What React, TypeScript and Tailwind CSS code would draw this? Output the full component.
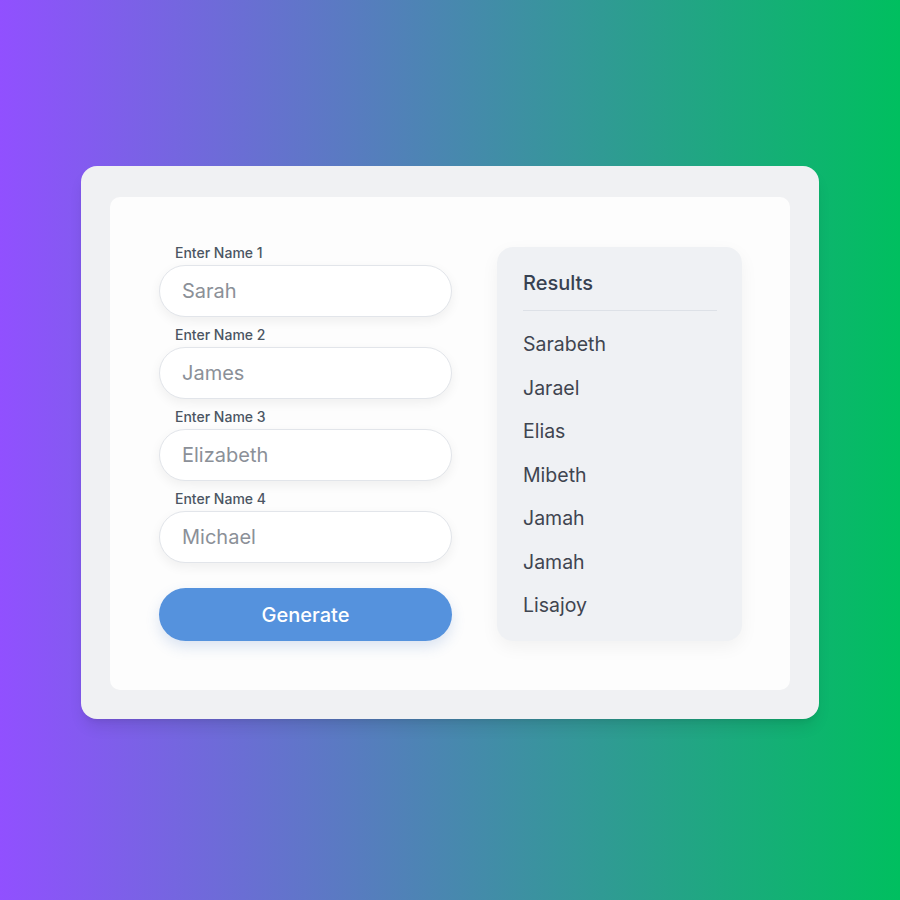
const names = ["Sarah", "James", "Elizabeth", "Michael"]
const results = ["Sarabeth", "Jarael", "Elias", "Mibeth", "Jamah", "Jamah", "Lisajoy"]

export default function App() {
  return (
    <div
      className="w-[900px] h-[900px] flex justify-center pt-[166px] bg-linear-to-r/srgb from-[#9150ff] to-[#00bf5f]"
      style={{ fontFamily: "Inter, 'Noto Sans', sans-serif" }}
    >
      <div className="w-[738px] h-[553px] bg-[#f0f1f3] rounded-[16px] p-[29px] pt-[31px] shadow-lg">
        <div className="w-full h-full bg-[#fdfdfd] rounded-[10px] flex pl-[49px] pr-[48px] pt-[46px] pb-[49px] gap-[45px]">
          {/* name inputs */}
          <div className="w-[293px] flex flex-col">
            {names.map((n, i) => (
              <div key={n} className="flex flex-col mb-[8px]">
                <label className="h-[20px] pl-[16px] text-[14px] leading-[20px] font-medium text-[#4b5563] mb-[2px]">
                  Enter Name {i + 1}
                </label>
                <input
                  placeholder={n}
                  className="h-[52px] rounded-full border border-[#e2e5ea] bg-white px-[22px] text-[20px] text-[#374151] placeholder:text-[#8b9098] shadow-[0_4px_12px_rgba(0,0,0,0.06)] outline-none"
                />
              </div>
            ))}
            <button className="mt-[17px] h-[54px] rounded-full bg-[#5592dd] text-white text-[20px] font-medium shadow-[0_6px_14px_rgba(60,110,190,0.18)]">
              Generate
            </button>
          </div>

          {/* results */}
          <div className="flex-1 mt-[4px] bg-[#eff1f4] rounded-[16px] px-[26px] pt-[22px] shadow-[0_6px_18px_rgba(0,0,0,0.05)]">
            <h2 className="text-[20px] leading-[28px] font-medium text-[#374151] pb-[13px] border-b border-[#dde1e7] mr-[-1px]">
              Results
            </h2>
            <ul className="pt-[19px] flex flex-col gap-[15.5px]">
              {results.map((r, i) => (
                <li key={i} className="text-[19.5px] leading-[28px] text-[#3f4550]">
                  {r}
                </li>
              ))}
            </ul>
          </div>
        </div>
      </div>
    </div>
  )
}
